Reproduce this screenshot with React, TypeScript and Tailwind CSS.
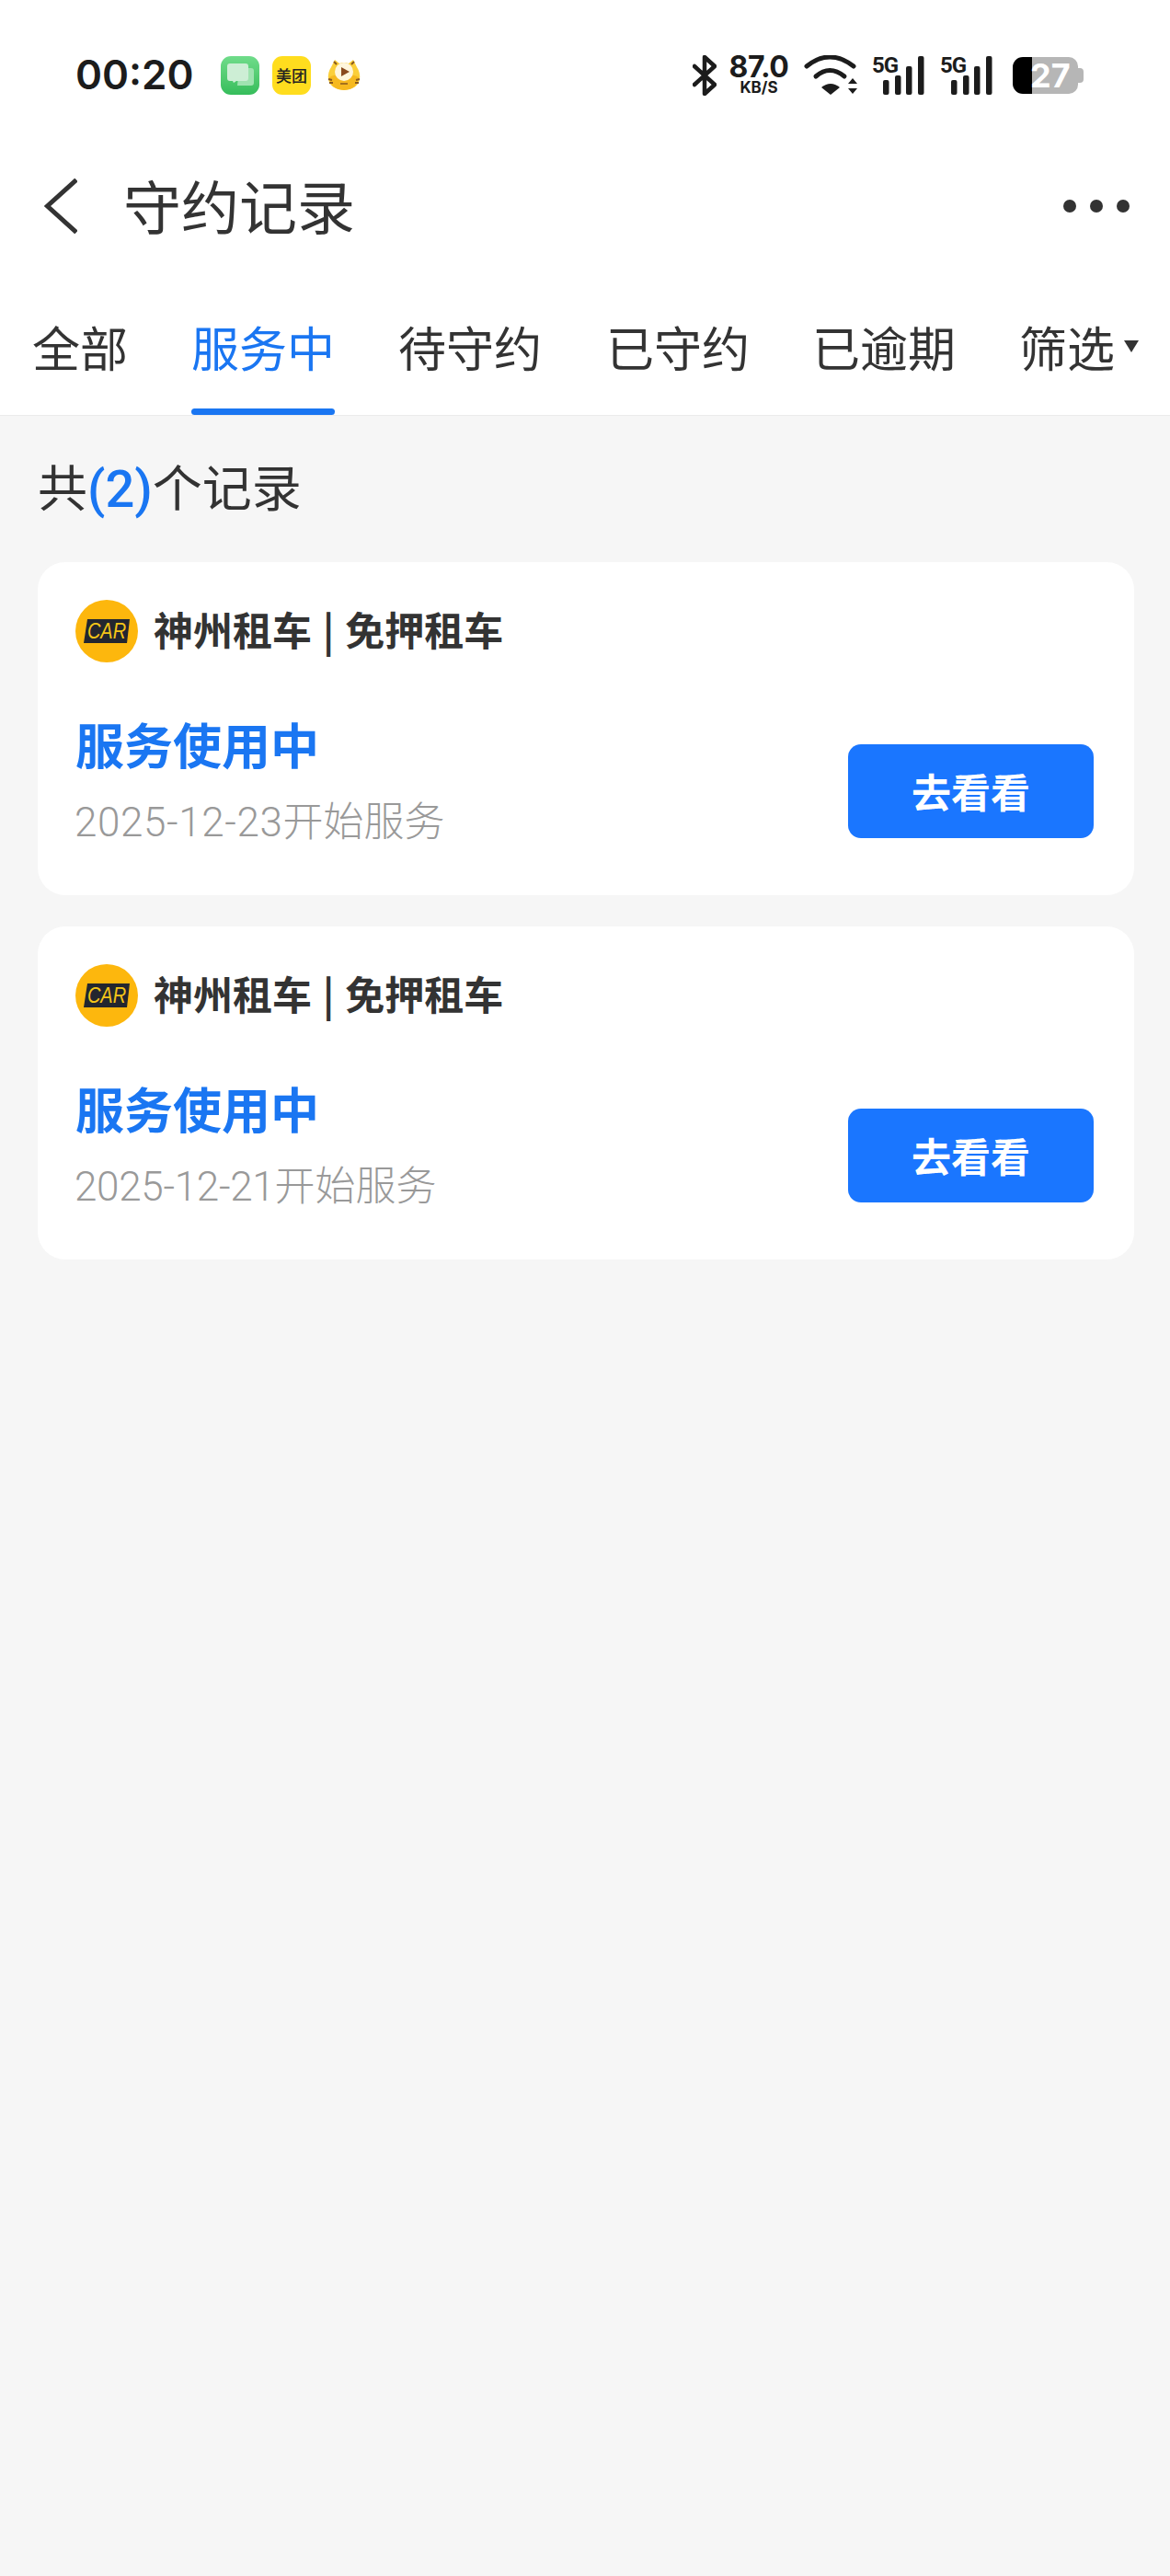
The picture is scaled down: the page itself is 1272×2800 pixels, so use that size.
const cjk = "font-['Noto_Sans_CJK_SC','Noto_Sans',sans-serif]";

function SignalIcon() {
  return (
    <div className="relative w-[60px] h-[44px]">
      <span className="absolute left-0 top-0 font-['Roboto',sans-serif] font-bold text-[24px] leading-[22px] tracking-[-1px] text-[#1c1c1c]">5G</span>
      <svg viewBox="0 0 60 44" className="absolute inset-0 w-[60px] h-[44px]" fill="#1c1c1c">
        <rect x="12" y="27" width="6.5" height="16" rx="2" />
        <rect x="25" y="22" width="6.5" height="21" rx="2" />
        <rect x="37" y="12" width="6.5" height="31" rx="2" />
        <rect x="50" y="1" width="6.5" height="42" rx="2" />
      </svg>
    </div>
  );
}

function StatusBar() {
  return (
    <div className="flex items-center h-[166px] pl-[82px] pr-[94px] pb-[3px]">
      <span className="font-['Inter',sans-serif] font-semibold text-[44px] leading-none text-[#1c1c1c] w-[158px] mb-[1px]">00:20</span>
      <div className="flex items-center">
        {/* messages app */}
        <div className="w-[42px] h-[42px] rounded-[11px] bg-gradient-to-b from-[#6fdc8a] to-[#35bd5b] flex items-center justify-center">
          <svg viewBox="0 0 42 42" className="w-[42px] h-[42px]">
            <path d="M20 13h13a3 3 0 0 1 3 3v13a3 3 0 0 1-3 3H22l-4 0z" fill="#9fe3b0" />
            <path d="M10 8h17a3 3 0 0 1 3 3v13a3 3 0 0 1-3 3H17l-3 2-1-2h-3a3 3 0 0 1-3-3V11a3 3 0 0 1 3-3z" fill="#cdeed5" />
          </svg>
        </div>
        {/* meituan */}
        <div className={`ml-[14px] w-[42px] h-[42px] rounded-[11px] bg-[#ffdd1e] flex items-center justify-center ${cjk} font-medium text-[17px] leading-none text-[#222] whitespace-nowrap`}>美团</div>
        {/* tiger */}
        <svg viewBox="0 0 38 36" className="ml-[17px] w-[38px] h-[36px]">
          <path d="M5 9 L9 1 L14 5 Q19 3 24 5 L29 1 L33 9 Q37 15 36 22 Q34 33 19 34 Q4 33 2 22 Q1 15 5 9Z" fill="#fbcf3a" />
          <path d="M3 20 Q19 12 35 20 Q34 33 19 34 Q4 33 3 20Z" fill="#f6b91f" />
          <circle cx="19" cy="14" r="10" fill="#fff6dc" />
          <path d="M16 9 L25 14 L16 19Z" fill="#8a4a1e" />
          <path d="M15 27h8" stroke="#8a5a1e" strokeWidth="1.5" />
          <path d="M8 3 L11 6 M30 3 L27 6 M2 22 L6 23 M3 26 L7 26 M36 22 L32 23 M35 26 L31 26" stroke="#8a5a1e" strokeWidth="2" />
        </svg>
      </div>
      <div className="ml-auto flex items-center">
        <svg viewBox="0 0 26 44" className="w-[26px] h-[44px]" fill="none" stroke="#1c1c1c" strokeWidth="4.5" strokeLinejoin="round" strokeLinecap="round">
          <path d="M2 12 L24 32 L13 42 L13 2 L24 12 L2 32" />
        </svg>
        <div className="ml-[13px] w-[66px] flex flex-col items-center font-['Inter',sans-serif] font-bold text-[#1c1c1c]">
          <span className="text-[32px] leading-[26px] tracking-[-0.5px]">87.0</span>
          <span className="text-[17px] leading-[18px]">KB/S</span>
        </div>
        <svg viewBox="0 0 60 44" className="ml-[16px] w-[60px] h-[44px]" fill="none" stroke="#1c1c1c" strokeWidth="5" strokeLinecap="round">
          <path d="M3 12 Q28 -8 54 12" />
          <path d="M13 23 Q28 10 44 23" />
          <path d="M19 35 L29 43 L39 35 Q29 27 19 35Z" fill="#1c1c1c" stroke="none" />
          <path d="M48 31 L53 25 L58 31Z M48 36 L58 36 L53 42Z" fill="#1c1c1c" stroke="none" />
        </svg>
        <div className="ml-[14px]"><SignalIcon /></div>
        <div className="ml-[14px]"><SignalIcon /></div>
        <div className="ml-[19px] relative w-[77px] h-[40px] flex">
          <div className="w-[21px] h-[40px] rounded-l-[11px] bg-black" />
          <div className="w-[50px] h-[40px] rounded-r-[10px] bg-[#b6b6b6]" />
          <div className="w-[6px] h-[16px] mt-[12px] rounded-r-[4px] bg-[#b6b6b6]" />
          <span className="absolute left-[19px] top-0 font-['Inter',sans-serif] font-bold text-[36px] leading-[40px] text-white">27</span>
        </div>
      </div>
    </div>
  );
}

function Header() {
  return (
    <div className="flex items-center h-[116px] pl-[48px] pr-[44px]">
      <svg viewBox="0 0 36 60" className="w-[36px] h-[60px]" fill="none" stroke="#333" strokeWidth="5">
        <path d="M35 1.5 L3.5 30 L35 58.5" />
      </svg>
      <h1 className={`ml-[50px] mb-[6px] ${cjk} font-normal text-[63px] leading-none text-[#333]`}>守约记录</h1>
      <div className="ml-auto flex gap-[15px]">
        <span className="w-[14px] h-[14px] rounded-full bg-[#333]" />
        <span className="w-[14px] h-[14px] rounded-full bg-[#333]" />
        <span className="w-[14px] h-[14px] rounded-full bg-[#333]" />
      </div>
    </div>
  );
}

function Tabs() {
  return (
    <div className={`flex h-[170px] pl-[35px] gap-[70px] bg-white border-b border-[#ebebeb] ${cjk} text-[52px] text-[#333]`}>
      <div className="pt-[63px] leading-[64px]">全部</div>
      <div className="relative pt-[63px] leading-[64px] text-[#1a76f2] -ml-[1px] -mr-[1px]">
        服务中
        <span className="absolute left-0 right-0 bottom-0 h-[7px] rounded-full bg-[#1a76f2]" />
      </div>
      <div className="pt-[63px] leading-[64px]">待守约</div>
      <div className="pt-[63px] leading-[64px]">已守约</div>
      <div className="pt-[63px] leading-[64px] -ml-[2px]">已逾期</div>
      <div className="pt-[63px] leading-[64px] flex -ml-[1px]">
        筛选
        <svg viewBox="0 0 16 13" className="ml-[10px] mt-[25px] w-[16px] h-[13px]" fill="#333">
          <path d="M0 0H16L8 13Z" />
        </svg>
      </div>
    </div>
  );
}

function CarLogo() {
  return (
    <div className="w-[68px] h-[68px] rounded-full bg-[#fdb70d] flex items-center justify-center">
      <svg viewBox="0 0 54 36" className="w-[54px] h-[36px]">
        <path d="M6 5 H52 L49 31 H2Z" fill="#23262f" />
        <text x="27" y="26" textAnchor="middle" fontFamily="Liberation Sans" fontStyle="italic" fontSize="24" textLength="42" lengthAdjust="spacingAndGlyphs" fill="#f5c518">CAR</text>
      </svg>
    </div>
  );
}

function RecordCard({ date, dateClass }: { date: string; dateClass: string }) {
  return (
    <div className="bg-white rounded-[30px] h-[362px] pl-[41px] pr-[44px] pt-[41px]">
      <div className="flex items-center">
        <CarLogo />
        <span className={`ml-[17px] mb-[6px] ${cjk} font-bold text-[43px] leading-none text-[#333] [word-spacing:2px]`}>神州租车 | 免押租车</span>
      </div>
      <div className="flex justify-between items-start">
        <div className="pt-[56px]">
          <div className={`${cjk} font-bold text-[53px] leading-[64px] text-[#1a76f2]`}>服务使用中</div>
          <div className="mt-[24px] -ml-[1px] leading-[60px] text-[44px] text-[#999] font-light font-['Roboto','Noto_Sans_CJK_SC',sans-serif]">
            <span className={dateClass}>{date}</span>开始服务
          </div>
        </div>
        <button className={`mt-[89px] w-[267px] h-[102px] pb-[2px] rounded-[14px] bg-[#1a76ff] text-white ${cjk} font-bold text-[43px] leading-none`}>去看看</button>
      </div>
    </div>
  );
}

export default function App() {
  return (
    <div className="w-[1272px] h-[2800px] bg-[#f6f6f6]">
      <div className="bg-white">
        <StatusBar />
        <Header />
      </div>
      <Tabs />
      <div className="px-[41px] pr-[39px]">
        <div className={`pt-[41px] pb-[44px] ${cjk} text-[54px] leading-[70px] text-[#333]`}>
          共<span className="text-[#1a76f2] font-['Roboto',sans-serif] font-medium text-[56px]">(2)</span>个记录
        </div>
        <div className="flex flex-col gap-[34px]">
          <RecordCard date="2025-12-23" dateClass="tracking-[0.6px]" />
          <RecordCard date="2025-12-21" dateClass="tracking-[-0.3px]" />
        </div>
      </div>
    </div>
  );
}
